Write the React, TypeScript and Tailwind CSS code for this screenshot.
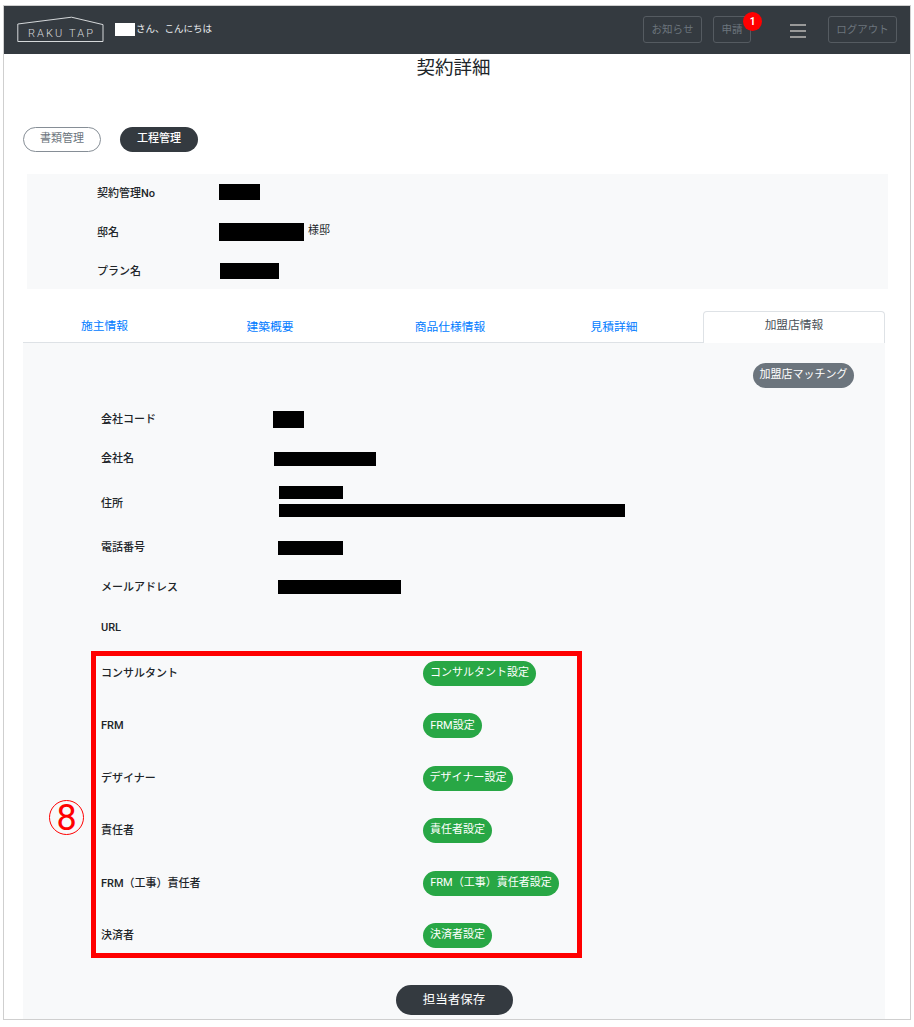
import React from "react";

const Redact = ({ className }: { className: string }) => <div className={`bg-black shrink-0 ${className}`} />;

function Logo() {
  return (
    <svg width="88" height="28" viewBox="0 0 88 28" className="shrink-0">
      <path d="M0.8 25.5V8L54.5 1.2L86 8.6V25.5Z" fill="none" stroke="#d5d8da" strokeWidth="1" />
      <text x="11" y="21" fill="#d5d8da" fontSize="11" fontWeight="300" letterSpacing="2.1" fontFamily="Roboto, sans-serif">RAKU TAP</text>
    </svg>
  );
}

const HeaderButton = ({ children, className = "" }: { children: React.ReactNode; className?: string }) => (
  <div className={`h-[27px] flex items-center justify-center rounded-[3px] border border-[#555b61] text-[10.5px] text-[#6c757d] ${className}`}>
    {children}
  </div>
);

const Label = ({ children, className = "" }: { children: React.ReactNode; className?: string }) => (
  <span className={`text-[11px] font-medium leading-none text-[#212529] ${className}`}>{children}</span>
);

const assignees = [
  { label: "コンサルタント", button: "コンサルタント設定", w: "w-[113px]" },
  { label: "FRM", button: "FRM設定", w: "w-[59px]" },
  { label: "デザイナー", button: "デザイナー設定", w: "w-[90px]" },
  { label: "責任者", button: "責任者設定", w: "w-[69px]" },
  { label: "FRM（工事）責任者", button: "FRM（工事）責任者設定", w: "w-[136px]" },
  { label: "決済者", button: "決済者設定", w: "w-[69px]" },
];

export default function App() {
  return (
    <div className="w-[914px] h-[1027px] overflow-hidden bg-white pt-[5px] pl-[3px] font-['Roboto','Noto_Sans_CJK_JP',sans-serif] text-[#212529]">
      <div className="relative w-[908px] h-[1015px] border border-[#cfcfcf] overflow-hidden">
        {/* header */}
        <header className="h-[48px] bg-[#343a40] flex items-center pl-[13px] pr-[13px] pb-[1px]">
          <Logo />
          <div className="ml-[10px] w-[20px] h-[13px] bg-white shrink-0 mb-[1px]" />
          <span className="ml-[1px] text-[9.5px] text-[#e9ecef] mb-[1px]">さん、こんにちは</span>
          <div className="ml-auto flex items-center">
            <HeaderButton className="w-[59px]">お知らせ</HeaderButton>
            <div className="relative ml-[11px]">
              <HeaderButton className="w-[38px]">申請</HeaderButton>
              <div className="absolute -top-[4px] left-[30px] w-[19px] h-[19px] rounded-full bg-[#ff0000] text-white text-[10px] font-bold flex items-center justify-center">1</div>
            </div>
            <div className="ml-[39px] w-[16px] flex flex-col gap-[4px] mt-[2px]">
              <div className="h-[2px] bg-[#999]" />
              <div className="h-[2px] bg-[#999]" />
              <div className="h-[2px] bg-[#999]" />
            </div>
            <HeaderButton className="ml-[22px] w-[69px]">ログアウト</HeaderButton>
          </div>
        </header>

        {/* title */}
        <h1 className="h-[28px] pr-[7px] flex items-center justify-center text-[18.5px] font-normal leading-none">契約詳細</h1>

        {/* pill tabs */}
        <div className="mt-[45px] ml-[19px] flex gap-[19px]">
          <div className="w-[78px] h-[25px] rounded-full border border-[#868e96] bg-white text-[#6c757d] text-[11px] flex items-center justify-center">書類管理</div>
          <div className="w-[78px] h-[25px] rounded-full bg-[#343a40] text-white text-[11px] font-medium flex items-center justify-center">工程管理</div>
        </div>

        {/* contract summary */}
        <section className="mt-[22px] ml-[23px] w-[861px] h-[115px] bg-[#f8f9fa] overflow-hidden">
          <div className="h-[38px] flex items-center pl-[70px]">
            <Label className="w-[122px]">契約管理No</Label>
            <Redact className="w-[41px] h-[16px] -mt-[3px]" />
          </div>
          <div className="h-[41px] flex items-center pl-[70px]">
            <Label className="w-[122px]">邸名</Label>
            <Redact className="w-[85px] h-[18px] -mt-[2px]" />
            <span className="ml-[4px] text-[11px] -mt-[2px]">様邸</span>
          </div>
          <div className="h-[36px] flex items-center pl-[70px]">
            <Label className="w-[123px]">プラン名</Label>
            <Redact className="w-[59px] h-[16px] -mt-[1px]" />
          </div>
        </section>

        {/* tabs */}
        <nav className="mt-[22px] ml-[19px] w-[862px] h-[32px] flex border-b border-[#dee2e6] text-[11.75px] text-[#007bff]">
          <div className="w-[163px] flex items-center justify-center">施主情報</div>
          <div className="w-[168px] flex items-center justify-center mt-[2px]">建築概要</div>
          <div className="w-[192px] flex items-center justify-center mt-[2px]">商品仕様情報</div>
          <div className="w-[136px] flex items-center justify-center mt-[3px]">見積詳細</div>
          <div className="ml-[21px] w-[182px] h-[32px] pb-[3px] bg-white rounded-t-[4px] border border-b-0 border-[#dee2e6] text-[#495057] flex items-center justify-center">加盟店情報</div>
        </nav>

        {/* panel */}
        <section className="ml-[19px] w-[862px] h-[680px] bg-[#f8f9fa]">
          <div className="pt-[20px] pr-[31px] flex justify-end">
            <div className="w-[101px] h-[25px] rounded-full bg-[#6c757d] text-white text-[11px] flex items-center justify-center">加盟店マッチング</div>
          </div>

          <div className="mt-[11px] pl-[78px]">
            <div className="h-[40px] flex items-center">
              <Label className="w-[172px]">会社コード</Label>
              <Redact className="w-[31px] h-[17px]" />
            </div>
            <div className="h-[39px] flex items-center">
              <Label className="w-[173px]">会社名</Label>
              <Redact className="w-[102px] h-[14px]" />
            </div>
            <div className="h-[50px] flex items-center">
              <Label className="w-[178px]">住所</Label>
              <div className="flex flex-col gap-[5px] -mt-[4px]">
                <Redact className="w-[64px] h-[13px]" />
                <Redact className="w-[346px] h-[13px]" />
              </div>
            </div>
            <div className="h-[39px] flex items-center">
              <Label className="w-[177px]">電話番号</Label>
              <Redact className="w-[65px] h-[14px]" />
            </div>
            <div className="h-[40px] flex items-center">
              <Label className="w-[177px]">メールアドレス</Label>
              <Redact className="w-[123px] h-[14px]" />
            </div>
            <div className="h-[40px] flex items-center">
              <Label>URL</Label>
            </div>
          </div>

          {/* highlighted assignees */}
          <div className="mt-[4px] ml-[68px] w-[491px] h-[307px] border-[5px] border-[#ff0000] pt-[5px] flex flex-col gap-[27.4px]">
            {assignees.map((a) => (
              <div key={a.button} className="h-[25px] pl-[5px] flex items-center">
                <Label className="w-[322px] shrink-0">{a.label}</Label>
                <div className={`${a.w} h-[25px] rounded-full bg-[#28a745] text-white text-[11px] flex items-center justify-center whitespace-nowrap`}>
                  {a.button}
                </div>
              </div>
            ))}
          </div>

          <div className="mt-[27px] mx-auto w-[117px] h-[30px] rounded-full bg-[#343a40] text-white text-[12.5px] flex items-center justify-center">担当者保存</div>
        </section>

        {/* callout number */}
        <div className="absolute left-[45px] top-[794px] w-[35px] h-[35px] rounded-full border border-[#ff0000] text-[#ff0000] text-[36px] leading-none flex items-center justify-center">8</div>
      </div>
    </div>
  );
}
